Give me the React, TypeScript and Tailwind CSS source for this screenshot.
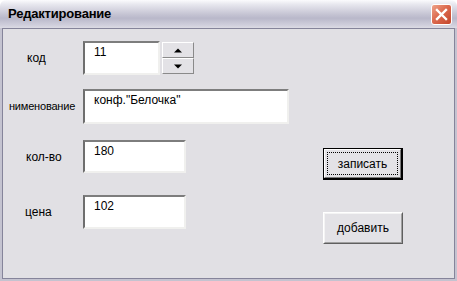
import React from "react";

const font = { fontFamily: '"Liberation Sans", Arial, sans-serif' };

function Field({ w, h, value }: { w: number; h: number; value: string }) {
  return (
    <div
      className="bg-white border-2 border-t-[#7d7d7d] border-l-[#6e6e6e] border-r-[#f0f0ee] border-b-[#f0f0ee] text-[12px] text-black pl-[9px] pt-[2px] leading-[15px] box-border"
      style={{ width: w, height: h }}
    >
      {value}
    </div>
  );
}

function SpinBtn({ up }: { up: boolean }) {
  return (
    <div className="w-[32px] h-[16px] bg-[#e3e2e6] border border-t-white border-l-white border-r-[#8a8a8a] border-b-[#8a8a8a] flex items-center justify-center box-border">
      <svg width="8" height="5" viewBox="0 0 8 5">
        {up ? <polygon points="0,4.5 8,4.5 4,0.5" fill="#000" /> : <polygon points="0,0.5 8,0.5 4,4.5" fill="#000" />}
      </svg>
    </div>
  );
}

function Btn({ label, def }: { label: string; def?: boolean }) {
  if (def) {
    return (
      <div className="w-[80px] h-[32px] border border-black border-r-2 border-b-2 box-border">
        <div className="w-full h-full border border-t-white border-l-white border-r-[#7a7a7a] border-b-[#7a7a7a] bg-[#e3e2e6] box-border p-[2px]">
          <div className="w-full h-full border border-dotted border-black flex items-center justify-center text-[12px] text-black box-border">
            {label}
          </div>
        </div>
      </div>
    );
  }
  return (
    <div className="w-[80px] h-[32px] border border-t-white border-l-white border-r-[#5f5f5f] border-b-[#5f5f5f] bg-[#e3e2e6] box-border">
      <div className="w-full h-full border border-t-[#f4f4f4] border-l-[#f4f4f4] border-r-[#a0a0a0] border-b-[#a0a0a0] flex items-center justify-center text-[12px] text-black box-border">
        {label}
      </div>
    </div>
  );
}

export default function App() {
  return (
    <div className="w-[457px] h-[281px] flex flex-col bg-white overflow-hidden" style={font}>
      <div
        className="h-[28px] flex items-center justify-between pl-[8px] pr-[5px] rounded-t-[6px]"
        style={{
          background:
            "linear-gradient(to bottom, #fbfbfd 0%, #e8e8ef 15%, #c6c5d4 50%, #b9b8ca 65%, #d0cfdc 90%, #dcdbe4 100%)",
        }}
      >
        <span className="text-[13px] font-bold text-black tracking-[-0.2px]">Редактирование</span>
        <div
          className="w-[21px] h-[21px] rounded-[3px] border border-white flex items-center justify-center"
          style={{ background: "linear-gradient(135deg, #eea38a 0%, #dc6a4f 45%, #c4452c 100%)" }}
        >
          <svg width="13" height="13" viewBox="0 0 13 13">
            <path d="M2 2 L11 11 M11 2 L2 11" stroke="#fff" strokeWidth="2.4" strokeLinecap="square" />
          </svg>
        </div>
      </div>
      <div className="flex-1 border-[2px] border-t-0 border-[#c4c3d0] box-border">
        <div className="w-full h-full border border-[#85849a] bg-[#e1e0e4] box-border pt-[12px] flex flex-col text-[12px] text-black">
          <div className="flex items-center h-[34px]">
            <div className="w-[80px] pl-[24px]">код</div>
            <Field w={77} h={34} value="11" />
            <div className="ml-[2px] flex flex-col self-start mt-[1px]">
              <SpinBtn up />
              <SpinBtn up={false} />
            </div>
          </div>
          <div className="flex items-center h-[35px] mt-[14px]">
            <div className="w-[80px] pl-[6px] text-[11px] tracking-[-0.2px]">нименование</div>
            <Field w={206} h={35} value={'конф."Белочка"'} />
          </div>
          <div className="flex mt-[16px]">
            <div className="flex flex-col">
              <div className="flex items-center h-[33px]">
                <div className="w-[80px] pl-[23px]">кол-во</div>
                <Field w={103} h={33} value="180" />
              </div>
              <div className="flex items-center h-[34px] mt-[22px]">
                <div className="w-[80px] pl-[22px]">цена</div>
                <Field w={103} h={34} value="102" />
              </div>
            </div>
            <div className="ml-[137px] mt-[8px] flex flex-col gap-[32px]">
              <Btn label="записать" def />
              <Btn label="добавить" />
            </div>
          </div>
        </div>
      </div>
    </div>
  );
}
